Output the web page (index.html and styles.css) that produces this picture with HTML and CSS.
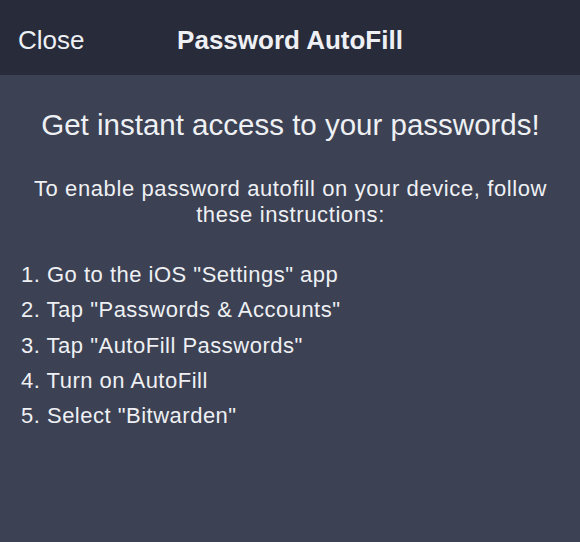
FILE: index.html
```html
<!DOCTYPE html>
<html>
<head>
<meta charset="utf-8">
<link rel="stylesheet" href="styles.css">
</head>
<body>
<header class="navbar">
  <span class="nav-left">Close</span>
  <span class="nav-title">Password AutoFill</span>
  <span class="nav-right"></span>
</header>
<main class="content">
  <h1 class="headline">Get instant access to your passwords!</h1>
  <p class="intro">To enable password autofill on your device, follow these instructions:</p>
  <ol class="steps">
    <li>1. Go to the iOS "Settings" app</li>
    <li>2. Tap "Passwords &amp; Accounts"</li>
    <li>3. Tap "AutoFill Passwords"</li>
    <li>4. Turn on AutoFill</li>
    <li>5. Select "Bitwarden"</li>
  </ol>
</main>
</body>
</html>
```
FILE: styles.css
```css
html, body {
  margin: 0;
  padding: 0;
  height: 100%;
}
body {
  background: #3c4153;
  color: #eef0f4;
  font-family: "Liberation Sans", Arial, sans-serif;
  display: flex;
  flex-direction: column;
}
.navbar {
  height: 75px;
  box-sizing: border-box;
  padding: 6px 18px 0;
  background: #272b3a;
  display: grid;
  grid-template-columns: 1fr auto 1fr;
  align-items: center;
  font-size: 26px;
}
.nav-left {
  justify-self: start;
}
.nav-title {
  font-weight: bold;
}
.content {
  flex: 1;
  padding: 32px 20px 0 21px;
}
.headline {
  margin: 0;
  text-align: center;
  font-weight: normal;
  font-size: 29.5px;
  line-height: 36px;
}
.intro {
  margin: 33px 0 0;
  text-align: center;
  font-size: 22px;
  letter-spacing: 0.6px;
  line-height: 26px;
}
.steps {
  list-style: none;
  margin: 29px 0 0;
  padding: 0;
  font-size: 22px;
  letter-spacing: 0.5px;
}
.steps li {
  line-height: 35.3px;
}
```
